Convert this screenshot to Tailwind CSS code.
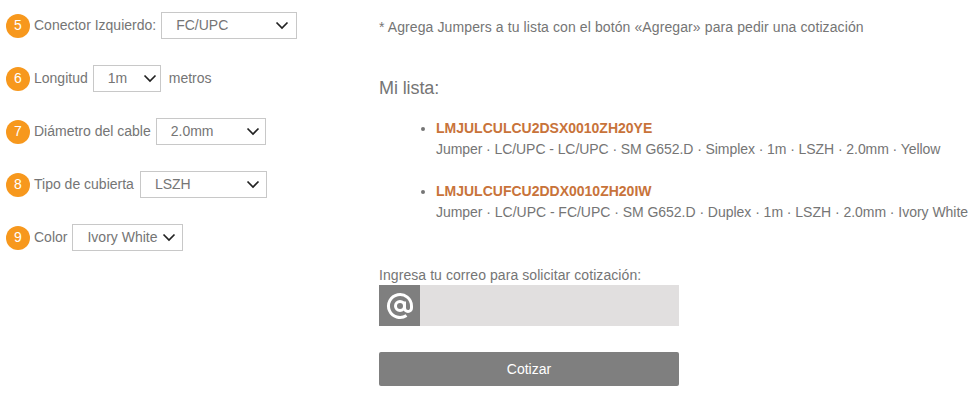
<!DOCTYPE html>
<html lang="es">
<head>
  <meta charset="UTF-8" />
  <title>Cotizar Jumpers</title>
  <script src="https://cdn.jsdelivr.net/npm/@tailwindcss/browser@4"></script>
</head>
<body class="bg-white font-['Liberation_Sans',Arial,sans-serif] text-[14px] text-[#757575] overflow-hidden">
  <div class="flex w-[980px] h-[401px]">
    <!-- opciones -->
    <div class="w-[379px] shrink-0 pl-[6px] pt-[12px] flex flex-col gap-[26px]">
      <div class="flex items-center h-[27px]">
        <span class="w-[24px] h-[24px] rounded-full bg-[#f7981d] text-white flex items-center justify-center">5</span>
        <label class="ml-[4px]">Conector Izquierdo:</label>
        <div class="relative ml-[5px]">
          <select class="appearance-none w-[136px] h-[27px] pl-[14px] border border-[#c8c8c8] bg-white outline-none"><option>FC/UPC</option></select>
          <svg class="absolute right-[8px] top-[9px] pointer-events-none" width="14" height="9" viewBox="0 0 14 9" fill="none" stroke="#222" stroke-width="1.7"><path d="M1.5 1.5 7 7l5.500-5.500" /></svg>
        </div>
      </div>
      <div class="flex items-center h-[27px]">
        <span class="w-[24px] h-[24px] rounded-full bg-[#f7981d] text-white flex items-center justify-center">6</span>
        <label class="ml-[4px]">Longitud</label>
        <div class="relative ml-[5px]">
          <select class="appearance-none w-[68px] h-[27px] pl-[14px] border border-[#c8c8c8] bg-white outline-none"><option>1m</option></select>
          <svg class="absolute right-[4px] top-[9px] pointer-events-none" width="14" height="9" viewBox="0 0 14 9" fill="none" stroke="#222" stroke-width="1.7"><path d="M1.5 1.5 7 7l5.500-5.500" /></svg>
        </div>
        <span class="ml-[8px]">metros</span>
      </div>
      <div class="flex items-center h-[27px]">
        <span class="w-[24px] h-[24px] rounded-full bg-[#f7981d] text-white flex items-center justify-center">7</span>
        <label class="ml-[4px]">Diámetro del cable</label>
        <div class="relative ml-[5px]">
          <select class="appearance-none w-[110px] h-[27px] pl-[14px] border border-[#c8c8c8] bg-white outline-none"><option>2.0mm</option></select>
          <svg class="absolute right-[6px] top-[9px] pointer-events-none" width="14" height="9" viewBox="0 0 14 9" fill="none" stroke="#222" stroke-width="1.7"><path d="M1.5 1.5 7 7l5.500-5.500" /></svg>
        </div>
      </div>
      <div class="flex items-center h-[27px]">
        <span class="w-[24px] h-[24px] rounded-full bg-[#f7981d] text-white flex items-center justify-center">8</span>
        <label class="ml-[4px]">Tipo de cubierta</label>
        <div class="relative ml-[6px]">
          <select class="appearance-none w-[127px] h-[27px] pl-[14px] border border-[#c8c8c8] bg-white outline-none"><option>LSZH</option></select>
          <svg class="absolute right-[7px] top-[9px] pointer-events-none" width="14" height="9" viewBox="0 0 14 9" fill="none" stroke="#222" stroke-width="1.7"><path d="M1.5 1.5 7 7l5.500-5.500" /></svg>
        </div>
      </div>
      <div class="flex items-center h-[27px]">
        <span class="w-[24px] h-[24px] rounded-full bg-[#f7981d] text-white flex items-center justify-center">9</span>
        <label class="ml-[4px]">Color</label>
        <div class="relative ml-[5px]">
          <select class="appearance-none w-[111px] h-[27px] pl-[14px] border border-[#c8c8c8] bg-white outline-none"><option>Ivory White</option></select>
          <svg class="absolute right-[7px] top-[9px] pointer-events-none" width="14" height="9" viewBox="0 0 14 9" fill="none" stroke="#222" stroke-width="1.7"><path d="M1.5 1.5 7 7l5.500-5.500" /></svg>
        </div>
      </div>
    </div>

    <!-- lista -->
    <div class="flex-1 pt-[19px]">
      <p class="leading-[17px] tracking-[0.1px]">* Agrega Jumpers a tu lista con el botón «Agregar» para pedir una cotización</p>
      <h2 class="text-[18px] leading-[21px] mt-[42px] tracking-[-0.1px]">Mi lista:</h2>
      <ul class="mt-[19px] pl-[57px] list-disc flex flex-col gap-[21px]">
        <li class="list-item leading-[21px]">
          <b class="text-[#c8733a]">LMJULCULCU2DSX0010ZH20YE</b><br />
          <span class="tracking-[-0.07px]">Jumper · LC/UPC - LC/UPC · SM G652.D · Simplex · 1m · LSZH · 2.0mm · Yellow</span>
        </li>
        <li class="list-item leading-[21px]">
          <b class="text-[#c8733a]">LMJULCUFCU2DDX0010ZH20IW</b><br />
          <span class="tracking-[-0.03px]">Jumper · LC/UPC - FC/UPC · SM G652.D · Duplex · 1m · LSZH · 2.0mm · Ivory White</span>
        </li>
      </ul>
      <label class="block mt-[44px] leading-[17px] tracking-[0.07px]">Ingresa tu correo para solicitar cotización:</label>
      <div class="flex w-[300px] h-[41px] mt-[1px] bg-[#e1dfdf]">
        <span class="w-[41px] h-[41px] bg-[#7f7f7f] flex items-center justify-center">
          <svg width="28" height="28" viewBox="0 0 28 28" fill="none" stroke="#fff" stroke-width="3"><circle cx="14" cy="14" r="4.500" /><path d="M18.500 9.500v6.500a3.500 3.500 0 0 0 7 0v-2a11.500 11.500 0 1 0-5 9.500" /></svg>
        </span>
        <input type="email" class="flex-1 min-w-0 bg-transparent outline-none px-2" />
      </div>
      <button class="block mt-[26px] w-[300px] h-[34px] rounded-[2px] bg-[#7f7f7f] text-white">Cotizar</button>
    </div>
  </div>
</body>
</html>
